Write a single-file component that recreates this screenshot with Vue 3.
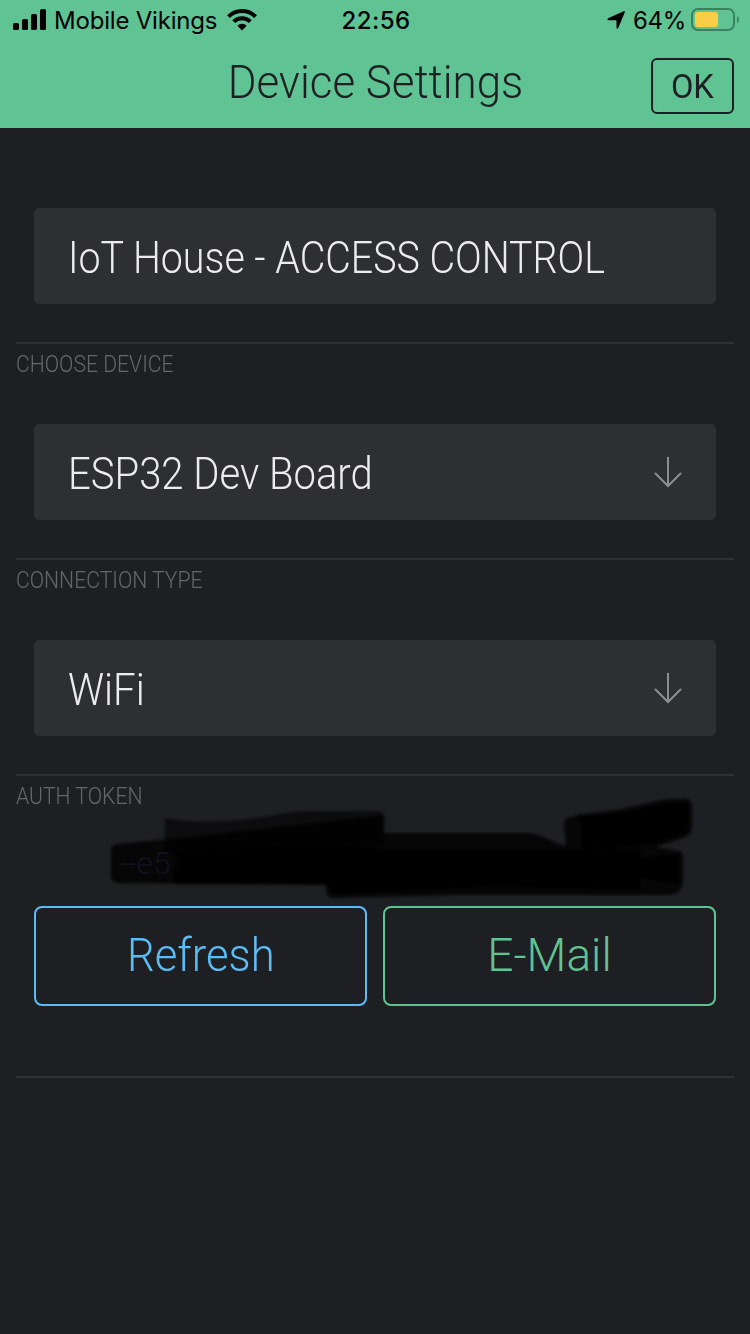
<script setup>
const fields = [
  { id: 'name', value: 'IoT House - ACCESS CONTROL', arrow: false, next: 'CHOOSE DEVICE' },
  { id: 'device', value: 'ESP32 Dev Board', arrow: true, next: 'CONNECTION TYPE' },
  { id: 'wifi-value', value: 'WiFi', arrow: true, next: 'AUTH TOKEN' },
]
</script>

<template>
  <main class="screen">
    <header class="header">
      <div class="status">
        <div class="side">
          <svg class="signal" width="34" height="22" viewBox="0 0 34 22">
            <rect x="0" y="14" width="6" height="7" rx="1.500" />
            <rect x="9" y="10" width="6" height="11" rx="1.500" />
            <rect x="18" y="5" width="6" height="16" rx="1.500" />
            <rect x="27" y="0" width="6" height="21" rx="1.500" />
          </svg>
          <span class="carrier">Mobile Vikings</span>
          <svg class="wifi" width="30" height="22" viewBox="0 0 30 22">
            <path d="M15 21.500 L10.300 16.800 A6.700 6.700 0 0 1 19.700 16.800 Z" />
            <path class="arc" d="M6.700 12.700 A11.700 11.700 0 0 1 23.300 12.700" />
            <path class="arc" d="M1.500 7.700 A19 19 0 0 1 28.500 7.700" />
          </svg>
        </div>
        <span class="clock">22:56</span>
        <div class="side right">
          <svg class="location" width="20" height="20" viewBox="0 0 20 20">
            <path d="M17.500 1.200 Q19.300 .6 18.700 2.400 L12.300 17.800 Q11.200 19.800 10.500 17.700 V11 Q10.500 10.200 9.700 10.200 H2.500 Q.2 9.700 2.200 8.300 Z" />
          </svg>
          <span class="percent">64%</span>
          <svg class="battery" width="48" height="24" viewBox="0 0 48 24">
            <rect x="1" y="1" width="42" height="21" rx="6" fill="none" stroke="#3c8060" stroke-width="2" />
            <rect x="4" y="4" width="23" height="15" rx="3" fill="#fbcc45" />
            <path d="M46 8 Q48 9 48 11.500 Q48 14 46 15 Z" fill="#3c8060" />
          </svg>
        </div>
      </div>
      <div class="nav">
        <h1 class="title">Device Settings</h1>
        <button class="ok"><span>OK</span></button>
      </div>
    </header>

    <section v-for="f in fields" :key="f.id" class="group">
      <div class="field">
        <span :class="['value', f.id]">{{ f.value }}</span>
        <svg v-if="f.arrow" class="arrow" width="28" height="32" viewBox="0 0 28 32">
          <path d="M14 1 V30 M1 17 L14 30 L27 17" />
        </svg>
      </div>
      <h2 class="label"><span>{{ f.next }}</span></h2>
    </section>

    <section class="token">
      <svg class="marker" width="600" height="110" viewBox="100 794 600 110">
        <defs>
          <filter id="soft" x="-5%" y="-10%" width="110%" height="120%" color-interpolation-filters="sRGB">
            <feGaussianBlur stdDeviation="1.800" />
          </filter>
        </defs>
        <g filter="url(#soft)">
          <path opacity=".6" d="M165 818 Q192 824 240 820 C275 816 290 811 310 811 H380 Q385 812 384 820 V846 L165 853 Z" />
          <path opacity=".8" d="M111 850 Q111 844 119 844 L190 837 L384 815 V833 H528 C545 835 553 843 566 846 L564 825 Q564 817 572 817 L580 814 C620 812 650 801 670 799 H687 Q692 800 692 807 V827 Q692 835 684 838 L656 847 L679 851 Q684 852 683 860 V882 Q682 893 669 895 L460 895 L332 898 Q325 898 326 885 L119 883 Q111 883 111 875 Z" />
          <path opacity=".95" d="M176 851 L325 846 L384 849 H640 V889 L485 887 L334 894 L325 884 H174 Z M580 816 Q625 815 665 803 H688 V832 L655 844 L583 849 Z M640 858 L679 854 V884 L640 878 Z" />
        </g>
      </svg>
      <span class="token-text">--e5</span>
    </section>

    <div class="actions">
      <button class="action refresh"><span>Refresh</span></button>
      <button class="action email"><span>E-Mail</span></button>
    </div>
    <hr class="end" />
  </main>
</template>

<style>
body { background: #1e1f23; }
</style>

<style scoped>
.screen {
  width: 750px;
  height: 1334px;
  overflow: hidden;
  background: #1e1f23;
  font-family: Roboto, "Liberation Sans", sans-serif;
  font-weight: 340;
}
.header { height: 128px; background: #5fc393; margin-bottom: 80px; }
.status {
  display: grid;
  grid-template-columns: 1fr auto 1fr;
  align-items: center;
  height: 40px;
  padding: 0 11px 0 13px;
  font-family: Inter, "Liberation Sans", sans-serif;
  font-size: 24px;
  font-weight: 400;
  color: #000;
}
.side { display: flex; align-items: center; }
.right { justify-content: flex-end; }
.signal { margin-top: -1px; }
.carrier { margin: 0 10px 0 7px; letter-spacing: -.2px; white-space: nowrap; }
.wifi .arc { fill: none; stroke: #000; stroke-width: 4; }
.clock { font-weight: 550; letter-spacing: .4px; }
.percent { margin: 0 5px 0 7px; letter-spacing: -.3px; }
.nav {
  display: grid;
  grid-template-columns: 100px 1fr 83px;
  padding-right: 16px;
}
.title {
  grid-column: 2;
  margin: 12px 0 0;
  font-size: 46px;
  line-height: 60px;
  font-weight: 340;
  text-align: center;
  white-space: nowrap;
  color: #1e1f23;
  transform: scaleX(.954);
}
.ok {
  box-sizing: border-box;
  height: 56px;
  margin-top: 18px;
  padding: 0;
  border: 2px solid #1e1f23;
  border-radius: 6px;
  background: none;
  font: 400 34px/52px Roboto, "Liberation Sans", sans-serif;
  color: #1e1f23;
}
.ok span { display: inline-block; transform: scaleX(.96); }
.field {
  display: flex;
  align-items: center;
  justify-content: space-between;
  box-sizing: border-box;
  height: 96px;
  margin: 0 34px;
  padding: 6px 34px 0;
  border-radius: 5px;
  background: #2e2f33;
}
.value {
  font-size: 43.500px;
  line-height: 60px;
  color: #ececee;
  white-space: nowrap;
  transform: scaleX(.905);
  transform-origin: 0 50%;
}
.value.device { transform: scaleX(.92); }
.value.wifi-value { transform: scaleX(.925); }
.arrow { margin-top: -6px; fill: none; stroke: #8d8e90; stroke-width: 2; }
.label {
  height: 78px;
  margin: 38px 16px 0;
  border-top: 2px solid #303135;
  font-size: 24px;
  line-height: 40px;
  font-weight: 340;
  color: #66676a;
}
.label span { display: inline-block; transform: scaleX(.882); transform-origin: 0 50%; }
.group { height: 216px; }
.token { position: relative; height: 50px; padding: 0 118px; }
.token-text {
  position: relative;
  display: inline-block;
  font-size: 32px;
  line-height: 40px;
  margin-top: -13px;
  color: #10121f;
}
.marker { position: absolute; left: 100px; top: -62px; }
.actions { display: flex; gap: 16px; margin: 0 34px; }
.action {
  flex: 1;
  height: 100px;
  padding: 0 0 2px;
  border: 2px solid;
  border-radius: 8px;
  background: none;
  font: 340 46px/60px Roboto, "Liberation Sans", sans-serif;
}
.action span { display: inline-block; }
.refresh { color: #5abef6; }
.refresh span { transform: scaleX(.948); }
.email { color: #5fc393; }
.end { height: 2px; margin: 70px 16px 0; border: 0; background: #303135; }
</style>
